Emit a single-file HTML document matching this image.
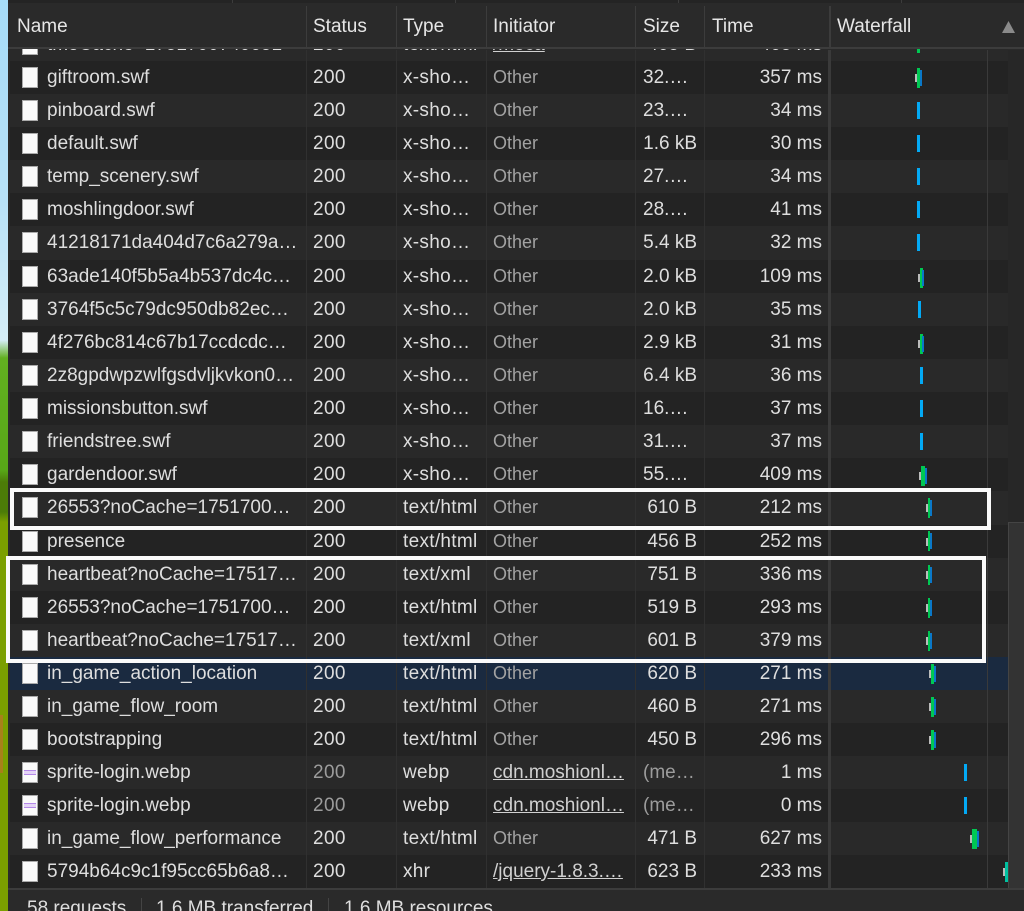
<!DOCTYPE html>
<html><head><meta charset="utf-8"><style>
html,body{margin:0;padding:0;background:#242424}
#p{position:relative;width:1024px;height:911px;overflow:hidden;background:#242424;font:19px/33px "Liberation Sans",sans-serif;color:#dedede}
#p div{position:absolute}
.bgs{left:0;top:0;width:8px;height:911px;background:linear-gradient(#a6dcf8 0,#b8e2f8 200px,#d6eef8 340px,#62b020 358px,#58a818 470px,#4c7c08 482px,#4c7c08 512px,#7b9f00 522px,#7b9f00 911px)}
.r{left:10px;width:998px;height:34px;background:#232323}
.l{background:#292929}
.sel{background:#1a2a40}
.r span{position:absolute;top:0;white-space:nowrap}
.r i{position:absolute;left:12px;top:6px;width:16px;height:21px;background:#fafafa;box-shadow:inset 0 0 0 1px #aaa}
.n{left:37px}.s{left:303px;letter-spacing:.4px}.t{left:393px;letter-spacing:.3px}.o{left:483px;color:#a2a2a2;font-size:18px}.u{left:483px;color:#d0d0d0;text-decoration:underline}
.z{right:311px}.zl{left:633px}.m{right:186px}.g{color:#9c9c9c}
.sp::after{content:"";position:absolute;left:2px;top:8px;width:12px;height:3px;background:#e4d4f6;border-top:1px solid #b488e8;border-bottom:1px solid #b488e8}
.v{top:50px;width:1px;height:838px;background:#303030}
.h{left:10px;top:6px;width:1014px;height:41px;background:#2a2a2a;line-height:41px;color:#e6e6e6}
.h span{position:absolute;top:0}
.h b{position:absolute;top:0;width:1px;height:41px;background:#3c3c3c}
.gr{width:2px;height:8px;background:#bbb}
.gn{width:3px;background:#00c853}
.bl{width:3px;height:17px;background:#03a9f4}
.db{width:2px;background:#0a78c8}
.box{border:4.5px solid #fafafa;box-sizing:border-box}
</style></head><body><div id="p">
<div class="bgs"></div>
<div style="left:0;top:715px;width:3px;height:58px;background:#a8801a"></div>
<div style="left:8px;top:0;width:1016px;height:911px;background:#2a2a2a"></div>
<div style="left:8px;top:0;width:1016px;height:3px;background:#242424"></div>
<div style="left:232px;top:0;width:1px;height:3px;background:#3c3c3c"></div>
<div style="left:455px;top:0;width:1px;height:3px;background:#3c3c3c"></div>
<div style="left:678px;top:0;width:1px;height:3px;background:#3c3c3c"></div>
<div style="left:901px;top:0;width:1px;height:3px;background:#3c3c3c"></div>

<div class="r l" style="top:28px"><i></i><span class="n">tmoCache=1751700740651</span><span class="s">200</span><span class="t">text/html</span><span class="u">/moca</span><span class="z">465 B</span><span class="m">465 ms</span></div>
<div class="r" style="top:61px"><i></i><span class="n">giftroom.swf</span><span class="s">200</span><span class="t">x-sho…</span><span class="o">Other</span><span class="zl">32.…</span><span class="m">357 ms</span></div>
<div class="r l" style="top:94px"><i></i><span class="n">pinboard.swf</span><span class="s">200</span><span class="t">x-sho…</span><span class="o">Other</span><span class="zl">23.…</span><span class="m">34 ms</span></div>
<div class="r" style="top:127px"><i></i><span class="n">default.swf</span><span class="s">200</span><span class="t">x-sho…</span><span class="o">Other</span><span class="z">1.6 kB</span><span class="m">30 ms</span></div>
<div class="r l" style="top:160px"><i></i><span class="n">temp_scenery.swf</span><span class="s">200</span><span class="t">x-sho…</span><span class="o">Other</span><span class="zl">27.…</span><span class="m">34 ms</span></div>
<div class="r" style="top:193px"><i></i><span class="n">moshlingdoor.swf</span><span class="s">200</span><span class="t">x-sho…</span><span class="o">Other</span><span class="zl">28.…</span><span class="m">41 ms</span></div>
<div class="r l" style="top:226px"><i></i><span class="n">41218171da404d7c6a279a…</span><span class="s">200</span><span class="t">x-sho…</span><span class="o">Other</span><span class="z">5.4 kB</span><span class="m">32 ms</span></div>
<div class="r" style="top:260px"><i></i><span class="n">63ade140f5b5a4b537dc4c…</span><span class="s">200</span><span class="t">x-sho…</span><span class="o">Other</span><span class="z">2.0 kB</span><span class="m">109 ms</span></div>
<div class="r l" style="top:293px"><i></i><span class="n">3764f5c5c79dc950db82ec…</span><span class="s">200</span><span class="t">x-sho…</span><span class="o">Other</span><span class="z">2.0 kB</span><span class="m">35 ms</span></div>
<div class="r" style="top:326px"><i></i><span class="n">4f276bc814c67b17ccdcdc…</span><span class="s">200</span><span class="t">x-sho…</span><span class="o">Other</span><span class="z">2.9 kB</span><span class="m">31 ms</span></div>
<div class="r l" style="top:359px"><i></i><span class="n">2z8gpdwpzwlfgsdvljkvkon0…</span><span class="s">200</span><span class="t">x-sho…</span><span class="o">Other</span><span class="z">6.4 kB</span><span class="m">36 ms</span></div>
<div class="r" style="top:392px"><i></i><span class="n">missionsbutton.swf</span><span class="s">200</span><span class="t">x-sho…</span><span class="o">Other</span><span class="zl">16.…</span><span class="m">37 ms</span></div>
<div class="r l" style="top:425px"><i></i><span class="n">friendstree.swf</span><span class="s">200</span><span class="t">x-sho…</span><span class="o">Other</span><span class="zl">31.…</span><span class="m">37 ms</span></div>
<div class="r" style="top:458px"><i></i><span class="n">gardendoor.swf</span><span class="s">200</span><span class="t">x-sho…</span><span class="o">Other</span><span class="zl">55.…</span><span class="m">409 ms</span></div>
<div class="r l" style="top:491px"><i></i><span class="n">26553?noCache=1751700…</span><span class="s">200</span><span class="t">text/html</span><span class="o">Other</span><span class="z">610 B</span><span class="m">212 ms</span></div>
<div class="r" style="top:525px"><i></i><span class="n">presence</span><span class="s">200</span><span class="t">text/html</span><span class="o">Other</span><span class="z">456 B</span><span class="m">252 ms</span></div>
<div class="r l" style="top:558px"><i></i><span class="n">heartbeat?noCache=17517…</span><span class="s">200</span><span class="t">text/xml</span><span class="o">Other</span><span class="z">751 B</span><span class="m">336 ms</span></div>
<div class="r" style="top:591px"><i></i><span class="n">26553?noCache=1751700…</span><span class="s">200</span><span class="t">text/html</span><span class="o">Other</span><span class="z">519 B</span><span class="m">293 ms</span></div>
<div class="r l" style="top:624px"><i></i><span class="n">heartbeat?noCache=17517…</span><span class="s">200</span><span class="t">text/xml</span><span class="o">Other</span><span class="z">601 B</span><span class="m">379 ms</span></div>
<div class="r sel" style="top:657px"><i></i><span class="n">in_game_action_location</span><span class="s">200</span><span class="t">text/html</span><span class="o">Other</span><span class="z">620 B</span><span class="m">271 ms</span></div>
<div class="r l" style="top:690px"><i></i><span class="n">in_game_flow_room</span><span class="s">200</span><span class="t">text/html</span><span class="o">Other</span><span class="z">460 B</span><span class="m">271 ms</span></div>
<div class="r" style="top:723px"><i></i><span class="n">bootstrapping</span><span class="s">200</span><span class="t">text/html</span><span class="o">Other</span><span class="z">450 B</span><span class="m">296 ms</span></div>
<div class="r l" style="top:756px"><i class="sp"></i><span class="n">sprite-login.webp</span><span class="s g">200</span><span class="t">webp</span><span class="u">cdn.moshionl…</span><span class="zl g">(me…</span><span class="m">1 ms</span></div>
<div class="r" style="top:789px"><i class="sp"></i><span class="n">sprite-login.webp</span><span class="s g">200</span><span class="t">webp</span><span class="u">cdn.moshionl…</span><span class="zl g">(me…</span><span class="m">0 ms</span></div>
<div class="r l" style="top:822px"><i></i><span class="n">in_game_flow_performance</span><span class="s">200</span><span class="t">text/html</span><span class="o">Other</span><span class="z">471 B</span><span class="m">627 ms</span></div>
<div class="r" style="top:855px"><i></i><span class="n">5794b64c9c1f95cc65b6a8…</span><span class="s">200</span><span class="t">xhr</span><span class="u">/jquery-1.8.3.…</span><span class="z">623 B</span><span class="m">233 ms</span></div>

<div class="v" style="left:306px"></div><div class="v" style="left:396px"></div><div class="v" style="left:486px"></div><div class="v" style="left:635px"></div><div class="v" style="left:704px"></div>
<div class="v" style="left:828px;width:3px;background:#3a3a3a"></div>
<div class="v" style="left:987px;background:#3a3a3a"></div>

<div class="gn" style="left:917px;top:48px;height:5px"></div>
<div class="gr" style="left:915px;top:74px"></div><div class="gn" style="left:917px;top:68px;height:20px"></div><div class="db" style="left:920px;top:70px;height:16px"></div>
<div class="bl" style="left:917px;top:102px"></div>
<div class="bl" style="left:917px;top:135px"></div>
<div class="bl" style="left:917px;top:168px"></div>
<div class="bl" style="left:917px;top:201px"></div>
<div class="bl" style="left:917px;top:234px"></div>
<div class="gr" style="left:918px;top:274px"></div><div class="gn" style="left:920px;top:268px;height:20px"></div><div class="db" style="left:922px;top:270px;height:16px"></div>
<div class="bl" style="left:918px;top:301px"></div>
<div class="gr" style="left:918px;top:340px"></div><div class="gn" style="left:920px;top:334px;height:20px"></div><div class="db" style="left:922px;top:336px;height:16px"></div>
<div class="bl" style="left:920px;top:367px"></div>
<div class="bl" style="left:920px;top:400px"></div>
<div class="bl" style="left:920px;top:433px"></div>
<div class="gr" style="left:919px;top:472px"></div><div class="gn" style="left:921px;top:466px;height:20px;width:4px"></div><div class="db" style="left:925px;top:468px;height:16px"></div>
<div class="gr" style="left:926px;top:504px"></div><div class="gn" style="left:928px;top:498px;height:20px;width:2px"></div><div class="db" style="left:930px;top:500px;height:16px"></div>
<div class="gr" style="left:926px;top:538px"></div><div class="gn" style="left:928px;top:531px;height:20px;width:2px"></div><div class="db" style="left:930px;top:533px;height:16px"></div>
<div class="gr" style="left:926px;top:571px"></div><div class="gn" style="left:928px;top:565px;height:20px;width:2px"></div><div class="db" style="left:930px;top:567px;height:16px"></div>
<div class="gr" style="left:926px;top:604px"></div><div class="gn" style="left:928px;top:598px;height:20px;width:2px"></div><div class="db" style="left:930px;top:600px;height:16px"></div>
<div class="gr" style="left:926px;top:637px"></div><div class="gn" style="left:928px;top:631px;height:20px;width:2px"></div><div class="db" style="left:930px;top:633px;height:16px"></div>
<div class="gr" style="left:929px;top:670px"></div><div class="gn" style="left:931px;top:664px;height:20px"></div><div class="db" style="left:934px;top:666px;height:16px"></div>
<div class="gr" style="left:929px;top:703px"></div><div class="gn" style="left:931px;top:697px;height:20px"></div><div class="db" style="left:934px;top:699px;height:16px"></div>
<div class="gr" style="left:929px;top:736px"></div><div class="gn" style="left:931px;top:730px;height:20px"></div><div class="db" style="left:934px;top:732px;height:16px"></div>
<div class="bl" style="left:964px;top:764px"></div>
<div class="bl" style="left:964px;top:797px"></div>
<div class="gr" style="left:970px;top:835px"></div><div class="gn" style="left:972px;top:829px;height:20px;width:5px"></div><div class="db" style="left:977px;top:831px;height:16px"></div>
<div class="gr" style="left:1003px;top:868px"></div><div class="gn" style="left:1005px;top:862px;height:20px;background:#00c0a0"></div>

<div style="left:1008px;top:50px;width:16px;height:838px;background:#272727"></div>
<div style="left:1008px;top:522px;width:16px;height:366px;background:#333;border-left:1px solid #444;border-top:1px solid #444;box-sizing:border-box"></div>

<div class="h">
<span style="left:7px">Name</span><b style="left:296px"></b>
<span style="left:303px">Status</span><b style="left:386px"></b>
<span style="left:393px">Type</span><b style="left:476px"></b>
<span style="left:483px">Initiator</span><b style="left:625px"></b>
<span style="left:633px">Size</span><b style="left:694px"></b>
<span style="left:702px">Time</span><b style="left:819px;width:2px"></b>
<span style="left:827px">Waterfall</span>
<svg style="position:absolute;left:992px;top:15px" width="13" height="12"><path d="M6.5 0L13 12H0Z" fill="#8a8a8a"/></svg>
</div>
<div style="left:8px;top:47px;width:1016px;height:2px;background:#3c3c3c"></div>

<div style="left:8px;top:888px;width:1016px;height:2px;background:#3c3c3c"></div>
<div style="left:8px;top:890px;width:1016px;height:21px;background:#2a2a2a"></div>
<div style="left:27px;top:892px;white-space:nowrap">58 requests</div>
<div style="left:141px;top:898px;width:1px;height:13px;background:#444"></div>
<div style="left:156px;top:892px;white-space:nowrap">1.6 MB transferred</div>
<div style="left:328px;top:898px;width:1px;height:13px;background:#444"></div>
<div style="left:344px;top:892px;white-space:nowrap">1.6 MB resources</div>

<div class="box" style="left:10px;top:488px;width:981px;height:42px"></div>
<div class="box" style="left:6px;top:556px;width:980px;height:107px"></div>
</div></body></html>
